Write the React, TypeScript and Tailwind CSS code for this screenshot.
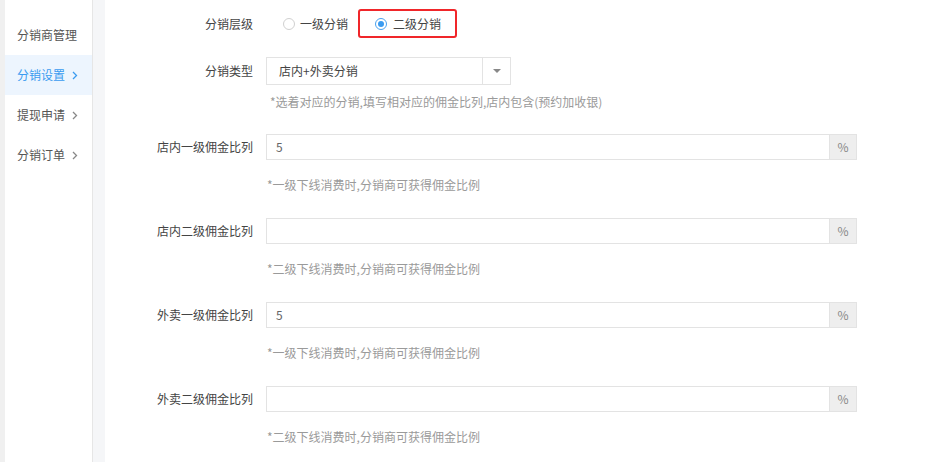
import React from "react";

const font = { fontFamily: '"Noto Sans CJK SC", "Noto Sans", sans-serif' };

function Chevron({ color }: { color: string }) {
  return (
    <svg width="6" height="9" viewBox="0 0 6 9" className="ml-[7px]">
      <path d="M1 1l3.5 3.5L1 8" fill="none" stroke={color} strokeWidth="1.3" />
    </svg>
  );
}

function SideItem({ label, active, chevron }: { label: string; active?: boolean; chevron?: boolean }) {
  return (
    <div
      className={`h-[40px] flex items-center pl-[12px] text-[12px] ${
        active ? "bg-[#edf5fe] text-[#3a9bf0]" : "text-[#555]"
      }`}
    >
      <span>{label}</span>
      {chevron && <Chevron color={active ? "#3a9bf0" : "#888"} />}
    </div>
  );
}

function Label({ children }: { children: React.ReactNode }) {
  return <div className="w-[148px] shrink-0 text-right text-[12px] text-[#444]">{children}</div>;
}

function RateRow({ label, value, hint }: { label: string; value: string; hint: string }) {
  return (
    <div>
      <div className="flex items-center h-[26px]">
        <Label>{label}</Label>
        <div className="ml-[13px] flex h-[26px] w-[591px] border border-[#e3e3e3]">
          <div className="flex-1 pl-[9px] flex items-center text-[12px] text-[#666]">{value}</div>
          <div className="w-[27px] bg-[#eeeeee] border-l border-[#e3e3e3] flex items-center justify-center text-[12px] text-[#888]">
            %
          </div>
        </div>
      </div>
      <div className="ml-[162px] mt-[16px] h-[18px] text-[12px] text-[#9a9a9a] leading-[18px]">{hint}</div>
    </div>
  );
}

export default function App() {
  return (
    <div className="flex h-[462px] w-[926px] bg-white overflow-hidden" style={font}>
      <div className="w-[5px] bg-[#f0f0f0]" />
      <div className="w-[88px] border-r border-[#e6e6e6] bg-white pt-[15px]">
        <SideItem label="分销商管理" />
        <SideItem label="分销设置" active chevron />
        <SideItem label="提现申请" chevron />
        <SideItem label="分销订单" chevron />
      </div>
      <div className="w-[12px] bg-[#f5f6f8]" />
      <div className="flex-1 pt-[9px]">
        {/* level row */}
        <div className="flex items-center h-[29px]">
          <Label>分销层级</Label>
          <div className="ml-[30px] flex items-center">
            <span className="w-[12px] h-[12px] rounded-full border border-[#d0d0d0] bg-white" />
            <span className="ml-[5px] text-[12px] text-[#444]">一级分销</span>
          </div>
          <div className="ml-[10px] h-[29px] flex items-center border-2 border-[#f0262a] rounded-[3px] pl-[15px] pr-[14px]">
            <span className="w-[12px] h-[12px] rounded-full border border-[#4aa2ef] flex items-center justify-center">
              <span className="w-[6px] h-[6px] rounded-full bg-[#3a9bf0]" />
            </span>
            <span className="ml-[6px] text-[12px] text-[#444]">二级分销</span>
          </div>
        </div>
        {/* type row */}
        <div className="flex items-center h-[28px] mt-[19px]">
          <Label>分销类型</Label>
          <div className="ml-[13px] flex h-[28px] w-[245px] border border-[#e3e3e3]">
            <div className="flex-1 pl-[12px] flex items-center text-[12px] text-[#444]">店内+外卖分销</div>
            <div className="w-[28px] border-l border-[#e3e3e3] flex items-center justify-center">
              <svg width="8" height="4" viewBox="0 0 8 4">
                <path d="M0 0h8L4 4z" fill="#888" />
              </svg>
            </div>
          </div>
        </div>
        <div className="ml-[165px] mt-[8px] h-[18px] leading-[18px] text-[12px] text-[#9a9a9a]">
          *选着对应的分销,填写相对应的佣金比列,店内包含(预约加收银)
        </div>
        <div className="mt-[23px] flex flex-col gap-[24px]">
          <RateRow label="店内一级佣金比列" value="5" hint="*一级下线消费时,分销商可获得佣金比例" />
          <RateRow label="店内二级佣金比列" value="" hint="*二级下线消费时,分销商可获得佣金比例" />
          <RateRow label="外卖一级佣金比列" value="5" hint="*一级下线消费时,分销商可获得佣金比例" />
          <RateRow label="外卖二级佣金比列" value="" hint="*二级下线消费时,分销商可获得佣金比例" />
        </div>
      </div>
    </div>
  );
}
